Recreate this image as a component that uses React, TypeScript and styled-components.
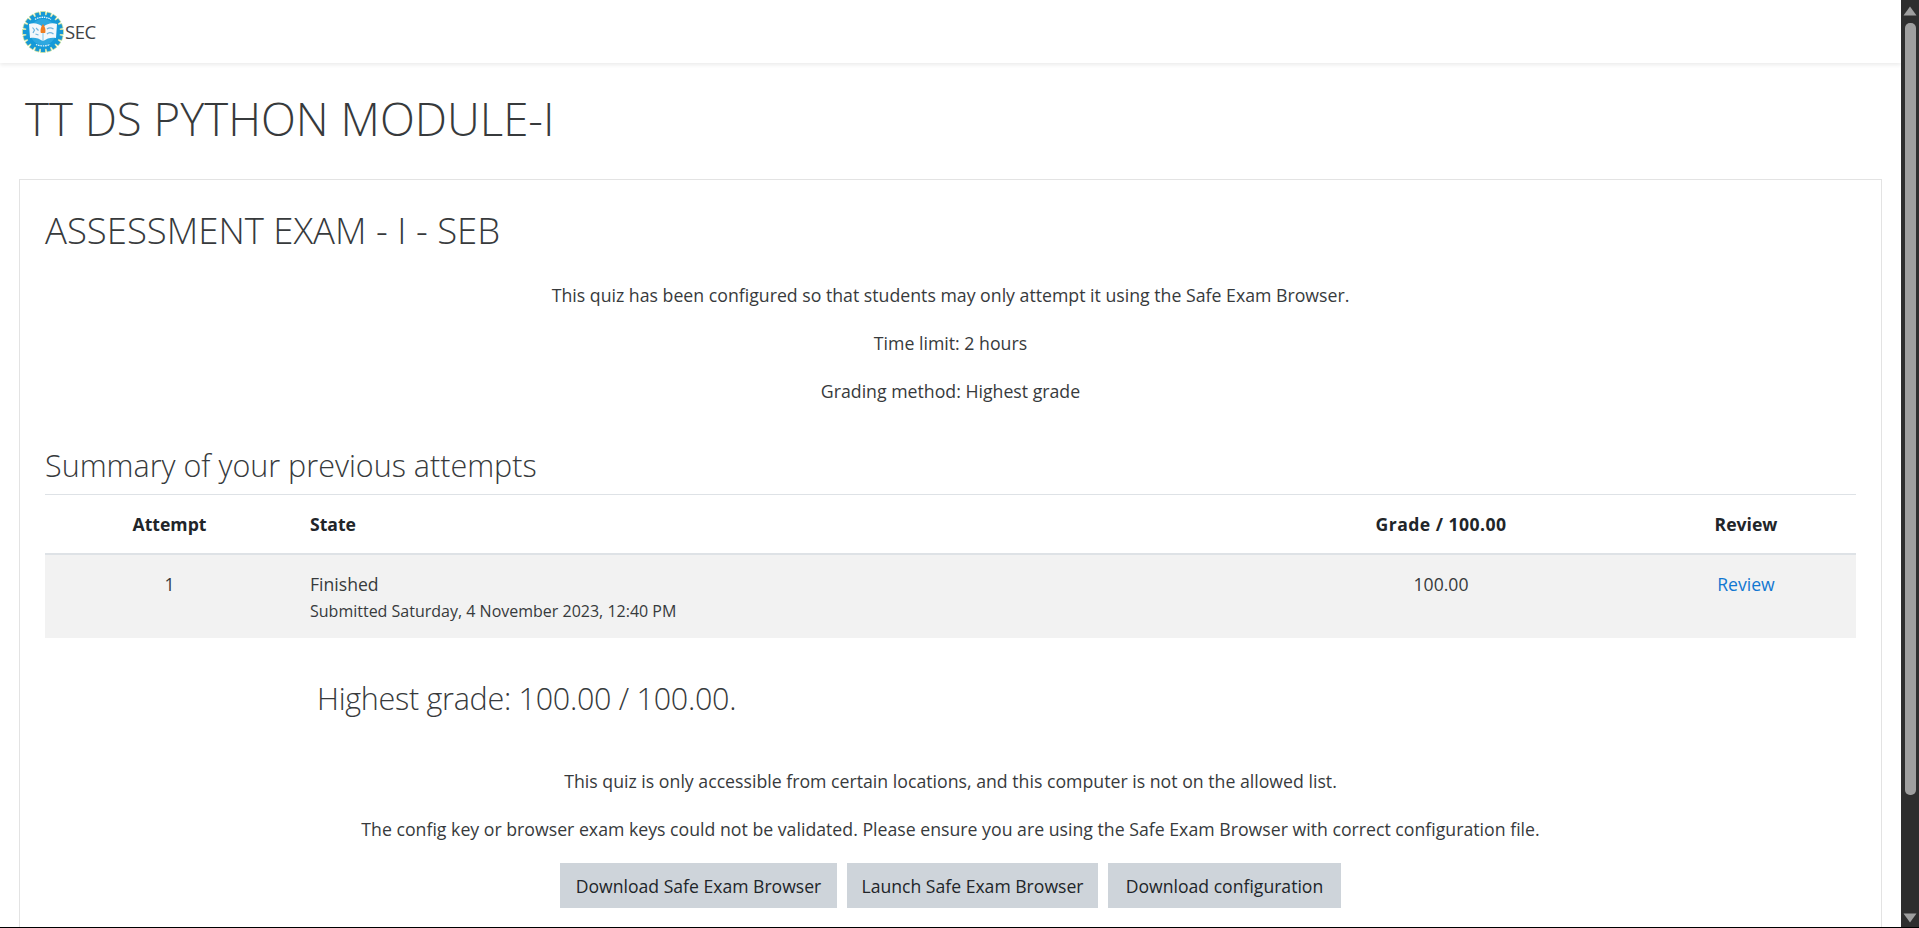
import React from "react";
import styled, { createGlobalStyle } from "styled-components";

const Global = createGlobalStyle`
  html, body { margin: 0; padding: 0; height: 100%; overflow: hidden; background: #fff; }
  body { font-family: "Open Sans", "Noto Sans", "Liberation Sans", sans-serif; font-size: 17.6px; color: #373a3c; }
  * { box-sizing: border-box; }
`;

const Shell = styled.div`
  display: flex;
  height: 928px;
  overflow: hidden;
  border-bottom: 1px solid #000;
`;
const Page = styled.div`
  flex: 1;
  min-width: 0;
  overflow: hidden;
`;
const Navbar = styled.header`
  display: flex;
  align-items: center;
  height: 63px;
  padding-left: 22px;
  background: #fff;
  box-shadow: 0 2px 4px rgba(0, 0, 0, 0.08);
`;
const Brand = styled.span`
  font-size: 18.5px;
  letter-spacing: -0.5px;
  color: #3f4346;
  margin-left: 1px;
`;
const Main = styled.main`
  padding: 0 19px;
`;
const PageTitle = styled.h1`
  margin: 0;
  height: 116px;
  padding: 21px 0 0 6px;
  font-size: 45.6px;
  line-height: 68px;
  font-weight: 300;
  color: #373a3c;
  white-space: nowrap;
`;
const Card = styled.section`
  border: 1px solid #e3e3e3;
  padding: 26px 25px 0;
  height: 760px;
`;
const QuizTitle = styled.h2`
  margin: 0;
  font-size: 36.5px;
  line-height: 48px;
  font-weight: 300;
  color: #373a3c;
`;
const Note = styled.p<{ $gap: number }>`
  margin: ${(p) => p.$gap}px 0 0;
  font-size: 17.72px;
  text-align: center;
  line-height: 24px;
  white-space: nowrap;
`;
const SectionTitle = styled.h3`
  margin: 41px 0 0;
  padding-bottom: 7px;
  border-bottom: 1px solid #dee2e6;
  font-size: 30.5px;
  line-height: 43px;
  font-weight: 300;
  color: #373a3c;
`;
const Table = styled.table`
  width: 100%;
  border-collapse: collapse;
  table-layout: fixed;
`;
const Th = styled.th<{ $align?: string; $w?: number }>`
  height: 59px;
  padding: 0 16px;
  font-weight: 700;
  color: #212529;
  text-align: ${(p) => p.$align ?? "center"};
  width: ${(p) => (p.$w ? `${p.$w}px` : "auto")};
  border-bottom: 2px solid #dee2e6;
`;
const GradeTh = styled(Th)`
  letter-spacing: 0.45px;
`;
const Row = styled.tr`
  background: #f2f2f2;
`;
const Td = styled.td<{ $align?: string }>`
  height: 84px;
  padding: 17px 16px 0;
  vertical-align: top;
  line-height: 24px;
  text-align: ${(p) => p.$align ?? "center"};
`;
const Sub = styled.div`
  font-size: 16px;
  line-height: 31px;
`;
const ReviewLink = styled.a`
  color: #1177d1;
  text-decoration: none;
`;
const Feedback = styled.div`
  margin: 39px 0 0 272px;
  font-size: 30.5px;
  line-height: 43px;
  font-weight: 300;
  letter-spacing: -0.28px;
`;
const Buttons = styled.div`
  display: flex;
  justify-content: center;
  gap: 10px;
  margin-top: 22px;
`;
const Btn = styled.a<{ $w: number }>`
  display: flex;
  align-items: center;
  justify-content: center;
  width: ${(p) => p.$w}px;
  height: 45px;
  background: #ced4da;
  color: #212529;
  white-space: nowrap;
`;
const Scroll = styled.aside`
  flex: 0 0 18px;
  display: flex;
  flex-direction: column;
  align-items: center;
  background: #2e2e2e;
`;
const Arrow = styled.svg`
  flex: 0 0 auto;
  width: 14px;
  height: 10px;
  margin: 6px 0 6px;
`;
const Thumb = styled.div`
  flex: 1;
  width: 11px;
  margin: 1px 0 118px;
  background: #9f9f9f;
  border-radius: 5px;
`;
const BottomArrow = styled(Arrow)`
  margin: 0 0 4px;
`;

function Logo() {
  const teeth = Array.from({ length: 20 }, (_, i) => i * 18);
  return (
    <svg width="42" height="42" viewBox="0 0 42 42" aria-hidden="true">
      {teeth.map((a) => (
        <rect key={a} x="18.7" y="0.6" width="4.6" height="5" fill="#1798d6" stroke="#d6e58a" strokeWidth="0.6" transform={`rotate(${a} 21 21)`} />
      ))}
      <circle cx="21" cy="21" r="17" fill="#159ad9" />
      <circle cx="21" cy="21" r="13" fill="#2ea8e0" />
      <path d="M7 13c5-1.5 10-.5 13.7 3V30C17 27 12 26 8 27Z" fill="#f2f7fb" />
      <path d="M35 13c-5-1.5-10-.5-13.7 3V30C25 27 30 26 34 27Z" fill="#f2f7fb" />
      <path d="M10.5 16.5l2 2.5-1.5 3M14 17l2.5 2.5M13.5 23l3 1" stroke="#6fb4de" strokeWidth="1.2" fill="none" />
      <path d="M25 18c2.500-2 5-1 6.500 0M25 23c2-2 5-1 6.500 0" stroke="#6fb4de" strokeWidth="1.3" fill="none" />
      <path d="M21 13c2.600 3.500 2.800 6.500 2.200 9h-4.400C18.200 19.500 18.400 16.500 21 13Z" fill="#ef7d22" />
      <path d="M13 8.500c5-3 11-3 16 0M14 33.500c4 1.800 10 1.800 14 0" stroke="#e6f5fc" strokeWidth="1.300" strokeDasharray="1.5 0.8" fill="none" />
    </svg>
  );
}

export default function App() {
  return (
    <>
      <Global />
      <Shell>
        <Page>
          <Navbar>
            <Logo />
            <Brand>SEC</Brand>
          </Navbar>
          <Main>
            <PageTitle>TT DS PYTHON MODULE-I</PageTitle>
            <Card>
              <QuizTitle>ASSESSMENT EXAM - I - SEB</QuizTitle>
              <Note $gap={29}>This quiz has been configured so that students may only attempt it using the Safe Exam Browser.</Note>
              <Note $gap={24}>Time limit: 2 hours</Note>
              <Note $gap={24}>Grading method: Highest grade</Note>
              <SectionTitle>Summary of your previous attempts</SectionTitle>
              <Table>
                <thead>
                  <tr>
                    <Th $w={249}>Attempt</Th>
                    <Th $align="left">State</Th>
                    <GradeTh $w={390}>Grade / 100.00</GradeTh>
                    <Th $w={220}>Review</Th>
                  </tr>
                </thead>
                <tbody>
                  <Row>
                    <Td>1</Td>
                    <Td $align="left">
                      Finished
                      <Sub>Submitted Saturday, 4 November 2023, 12:40 PM</Sub>
                    </Td>
                    <Td>100.00</Td>
                    <Td>
                      <ReviewLink href="#">Review</ReviewLink>
                    </Td>
                  </Row>
                </tbody>
              </Table>
              <Feedback>Highest grade: 100.00 / 100.00.</Feedback>
              <Note $gap={49}>This quiz is only accessible from certain locations, and this computer is not on the allowed list.</Note>
              <Note $gap={24}>The config key or browser exam keys could not be validated. Please ensure you are using the Safe Exam Browser with correct configuration file.</Note>
              <Buttons>
                <Btn $w={277}>Download Safe Exam Browser</Btn>
                <Btn $w={251}>Launch Safe Exam Browser</Btn>
                <Btn $w={233}>Download configuration</Btn>
              </Buttons>
            </Card>
          </Main>
        </Page>
        <Scroll>
          <Arrow viewBox="0 0 14 10"><path d="M7 0.5 L13.5 9.5 H0.5 Z" fill="#9f9f9f" /></Arrow>
          <Thumb />
          <BottomArrow viewBox="0 0 14 10"><path d="M7 9.5 L13.5 0.5 H0.5 Z" fill="#9f9f9f" /></BottomArrow>
        </Scroll>
      </Shell>
    </>
  );
}
